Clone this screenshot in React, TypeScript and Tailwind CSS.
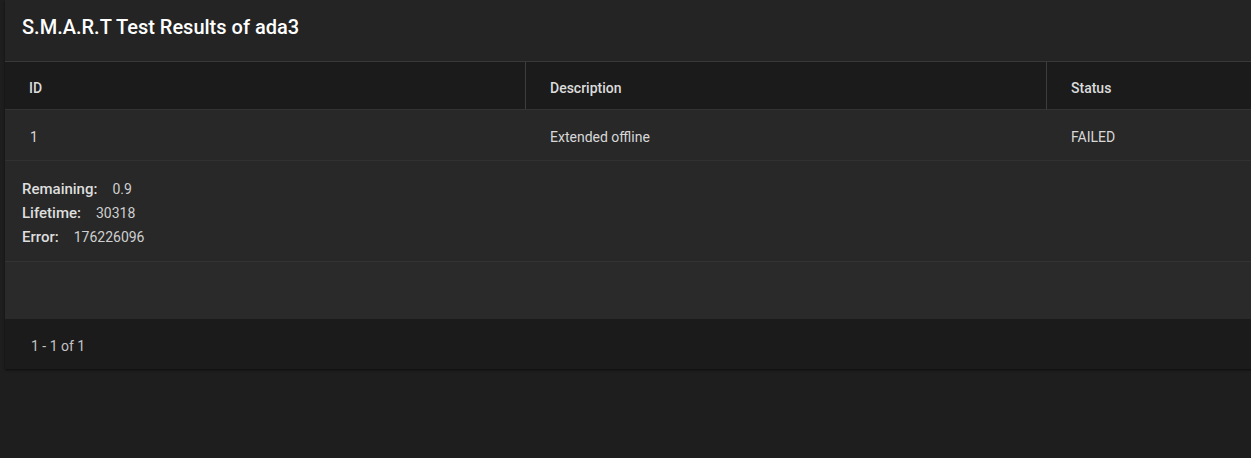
const columns = ["ID", "Description", "Status"];

const row = { id: "1", description: "Extended offline", status: "FAILED" };

const details = [
  { label: "Remaining:", value: "0.9" },
  { label: "Lifetime:", value: "30318" },
  { label: "Error:", value: "176226096" },
];

export default function App() {
  return (
    <div
      className="h-[458px] w-full overflow-hidden bg-[#1e1e1e] text-[#e6e6e6]"
      style={{ fontFamily: "Roboto, 'Noto Sans', sans-serif" }}
    >
      <div className="ml-[5px] w-[1563px] bg-[#242424] shadow-[0_1px_2px_rgba(0,0,0,0.6)]">
        {/* title */}
        <div className="flex h-[62px] items-center border-b border-[#383838] pl-[17px] pb-[7px]">
          <h1 className="text-[20px] font-medium text-white">S.M.A.R.T Test Results of ada3</h1>
        </div>

        {/* header */}
        <div className="grid h-[48px] grid-cols-[520px_521px_522px] bg-[#1b1b1b] border-b border-[#333]">
          {columns.map((c, i) => (
            <div
              key={c}
              className={`flex items-center pl-[24px] pt-[6px] text-[14px] font-medium text-[#dcdcdc] ${i > 0 ? "border-l border-[#3d3d3d]" : ""}`}
            >
              {c}
            </div>
          ))}
        </div>

        {/* row */}
        <div className="grid h-[51px] grid-cols-[520px_521px_522px] bg-[#282828] border-b border-[#313131] text-[14px] text-[#d8d8d8]">
          <div className="flex items-center pl-[25px] pt-[4px]">{row.id}</div>
          <div className="flex items-center pl-[25px] pt-[4px]">{row.description}</div>
          <div className="flex items-center pl-[25px] pt-[4px]">{row.status}</div>
        </div>

        {/* expanded details */}
        <div className="flex h-[101px] flex-col justify-center bg-[#282828] border-b border-[#333] pl-[17px] pt-[5px]">
          {details.map((d) => (
            <div key={d.label} className="flex h-[24px] items-center">
              <span className="text-[15px] font-medium text-[#dedede]">{d.label}</span>
              <span className="ml-[15px] text-[14px] text-[#cfcfcf]">{d.value}</span>
            </div>
          ))}
        </div>

        <div className="h-[57px] bg-[#2a2a2a]" />

        {/* footer */}
        <div className="flex h-[50px] items-center bg-[#1b1b1b] pl-[26px] pt-[4px] text-[14px] text-[#c4c4c4]">
          1 - 1 of 1
        </div>
      </div>
    </div>
  );
}
